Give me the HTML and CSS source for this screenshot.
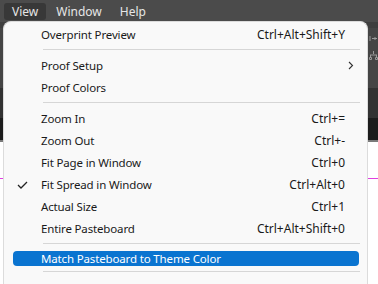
FILE: index.html
```html
<!DOCTYPE html>
<html lang="en">

<head>
    <meta charset="UTF-8">
    <title>View Menu</title>
    <link rel="stylesheet" href="styles.css">
</head>

<body>
    <div class="menubar">
        <span class="menubar-item active">View</span>
        <span class="menubar-item">Window</span>
        <span class="menubar-item">Help</span>
    </div>

    <div class="workspace">
        <div class="band toolbar">
            <svg class="tool-icon" width="9" height="9" viewBox="0 0 9 9"><path d="M1 2v5M3 4.5h5M6 3v3" stroke="#9a9a9a" fill="none"/></svg>
            <svg class="tool-icon" width="9" height="9" viewBox="0 0 9 9"><path d="M4.5 0v3M1 4h7M1.5 4v2M7.5 4v2M0.5 6.5h2v2h-2zM6.5 6.5h2v2h-2z" stroke="#9a9a9a" fill="none"/></svg>
        </div>
        <div class="band dark"></div>
        <div class="band ruler"></div>
        <div class="band canvas">
            <div class="guide"></div>
        </div>
    </div>

    <div class="menu">
        <div class="item"><span class="label">Overprint Preview</span><span class="key">Ctrl+Alt+Shift+Y</span></div>
        <div class="sep"></div>
        <div class="item"><span class="label">Proof Setup</span>
            <svg class="arrow" width="6" height="9" viewBox="0 0 6 9"><path d="M1 1l3.5 3.5L1 8" stroke="#333" fill="none" stroke-width="1.1"/></svg>
        </div>
        <div class="item"><span class="label">Proof Colors</span></div>
        <div class="sep"></div>
        <div class="item"><span class="label">Zoom In</span><span class="key">Ctrl+=</span></div>
        <div class="item"><span class="label">Zoom Out</span><span class="key">Ctrl+-</span></div>
        <div class="item"><span class="label">Fit Page in Window</span><span class="key">Ctrl+0</span></div>
        <div class="item checked">
            <svg class="check" width="11" height="8" viewBox="0 0 11 8"><path d="M1 4l3 3 6-6" stroke="#222" fill="none" stroke-width="1.3"/></svg>
            <span class="label">Fit Spread in Window</span><span class="key">Ctrl+Alt+0</span>
        </div>
        <div class="item"><span class="label">Actual Size</span><span class="key">Ctrl+1</span></div>
        <div class="item"><span class="label">Entire Pasteboard</span><span class="key">Ctrl+Alt+Shift+0</span></div>
        <div class="sep"></div>
        <div class="item selected"><span class="label">Match Pasteboard to Theme Color</span></div>
        <div class="sep"></div>
    </div>
</body>

</html>
```

FILE: styles.css
```css
body {
    margin: 0;
    width: 378px;
    height: 284px;
    overflow: hidden;
    position: relative;
    background-color: #f2f2f2;
    font-family: "Noto Sans", "Open Sans", sans-serif;
    font-size: 12px;
}

.menubar {
    height: 22px;
    background-color: #4b4b4b;
    display: flex;
    align-items: center;
    padding-left: 4px;
    gap: 2px;
}

.menubar-item {
    color: #e6e6e6;
    padding: 1px 8px 1px;
    line-height: 15px;
    font-size: 12px;
    border-radius: 3px;
}

.menubar-item.active {
    background-color: #383838;
}

.workspace {
    display: flex;
    flex-direction: column;
}

.band {
    height: 30px;
}

.toolbar {
    height: 66px;
    background-color: #454545;
    border-top: 6px solid #3e3e3e;
    display: flex;
    flex-direction: column;
    align-items: flex-end;
    padding: 6px 0 0;
    gap: 8px;
    box-sizing: border-box;
}

.dark {
    background-color: #323232;
}

.ruler {
    height: 22px;
    background-color: #1c1c1c;
    border-bottom: 2px solid #7a7a7a;
}

.canvas {
    height: 142px;
    background-color: #ffffff;
    padding-top: 36px;
    box-sizing: border-box;
}

.guide {
    height: 1px;
    background-color: #e040e0;
}

.menu {
    position: absolute;
    left: 3px;
    top: 21px;
    width: 365px;
    height: 263px;
    background-color: #f9f9f9;
    border: 1px solid #dcdcdc;
    border-bottom: none;
    border-radius: 8px 8px 0 0;
    padding-top: 1px;
    box-sizing: border-box;
    color: #1a1a1a;
}

.item {
    height: 22px;
    display: flex;
    align-items: center;
    position: relative;
    margin: 0 8px 0 9px;
    padding: 0 14px 0 28px;
    border-radius: 4px;
}

.label {
    flex: 1;
    font-size: 11.5px;
    letter-spacing: -0.15px;
}

.arrow {
    margin-right: -9px;
}

.check {
    position: absolute;
    left: 4px;
    top: 8px;
}

.item.selected {
    height: 15px;
    background-color: #0a74d0;
    color: #ffffff;
    margin-top: 7px;
    margin-bottom: 5px;
}

.sep {
    height: 1px;
    background-color: #d6d6d6;
    margin: 4px 7px 4px 39px;
}
```
